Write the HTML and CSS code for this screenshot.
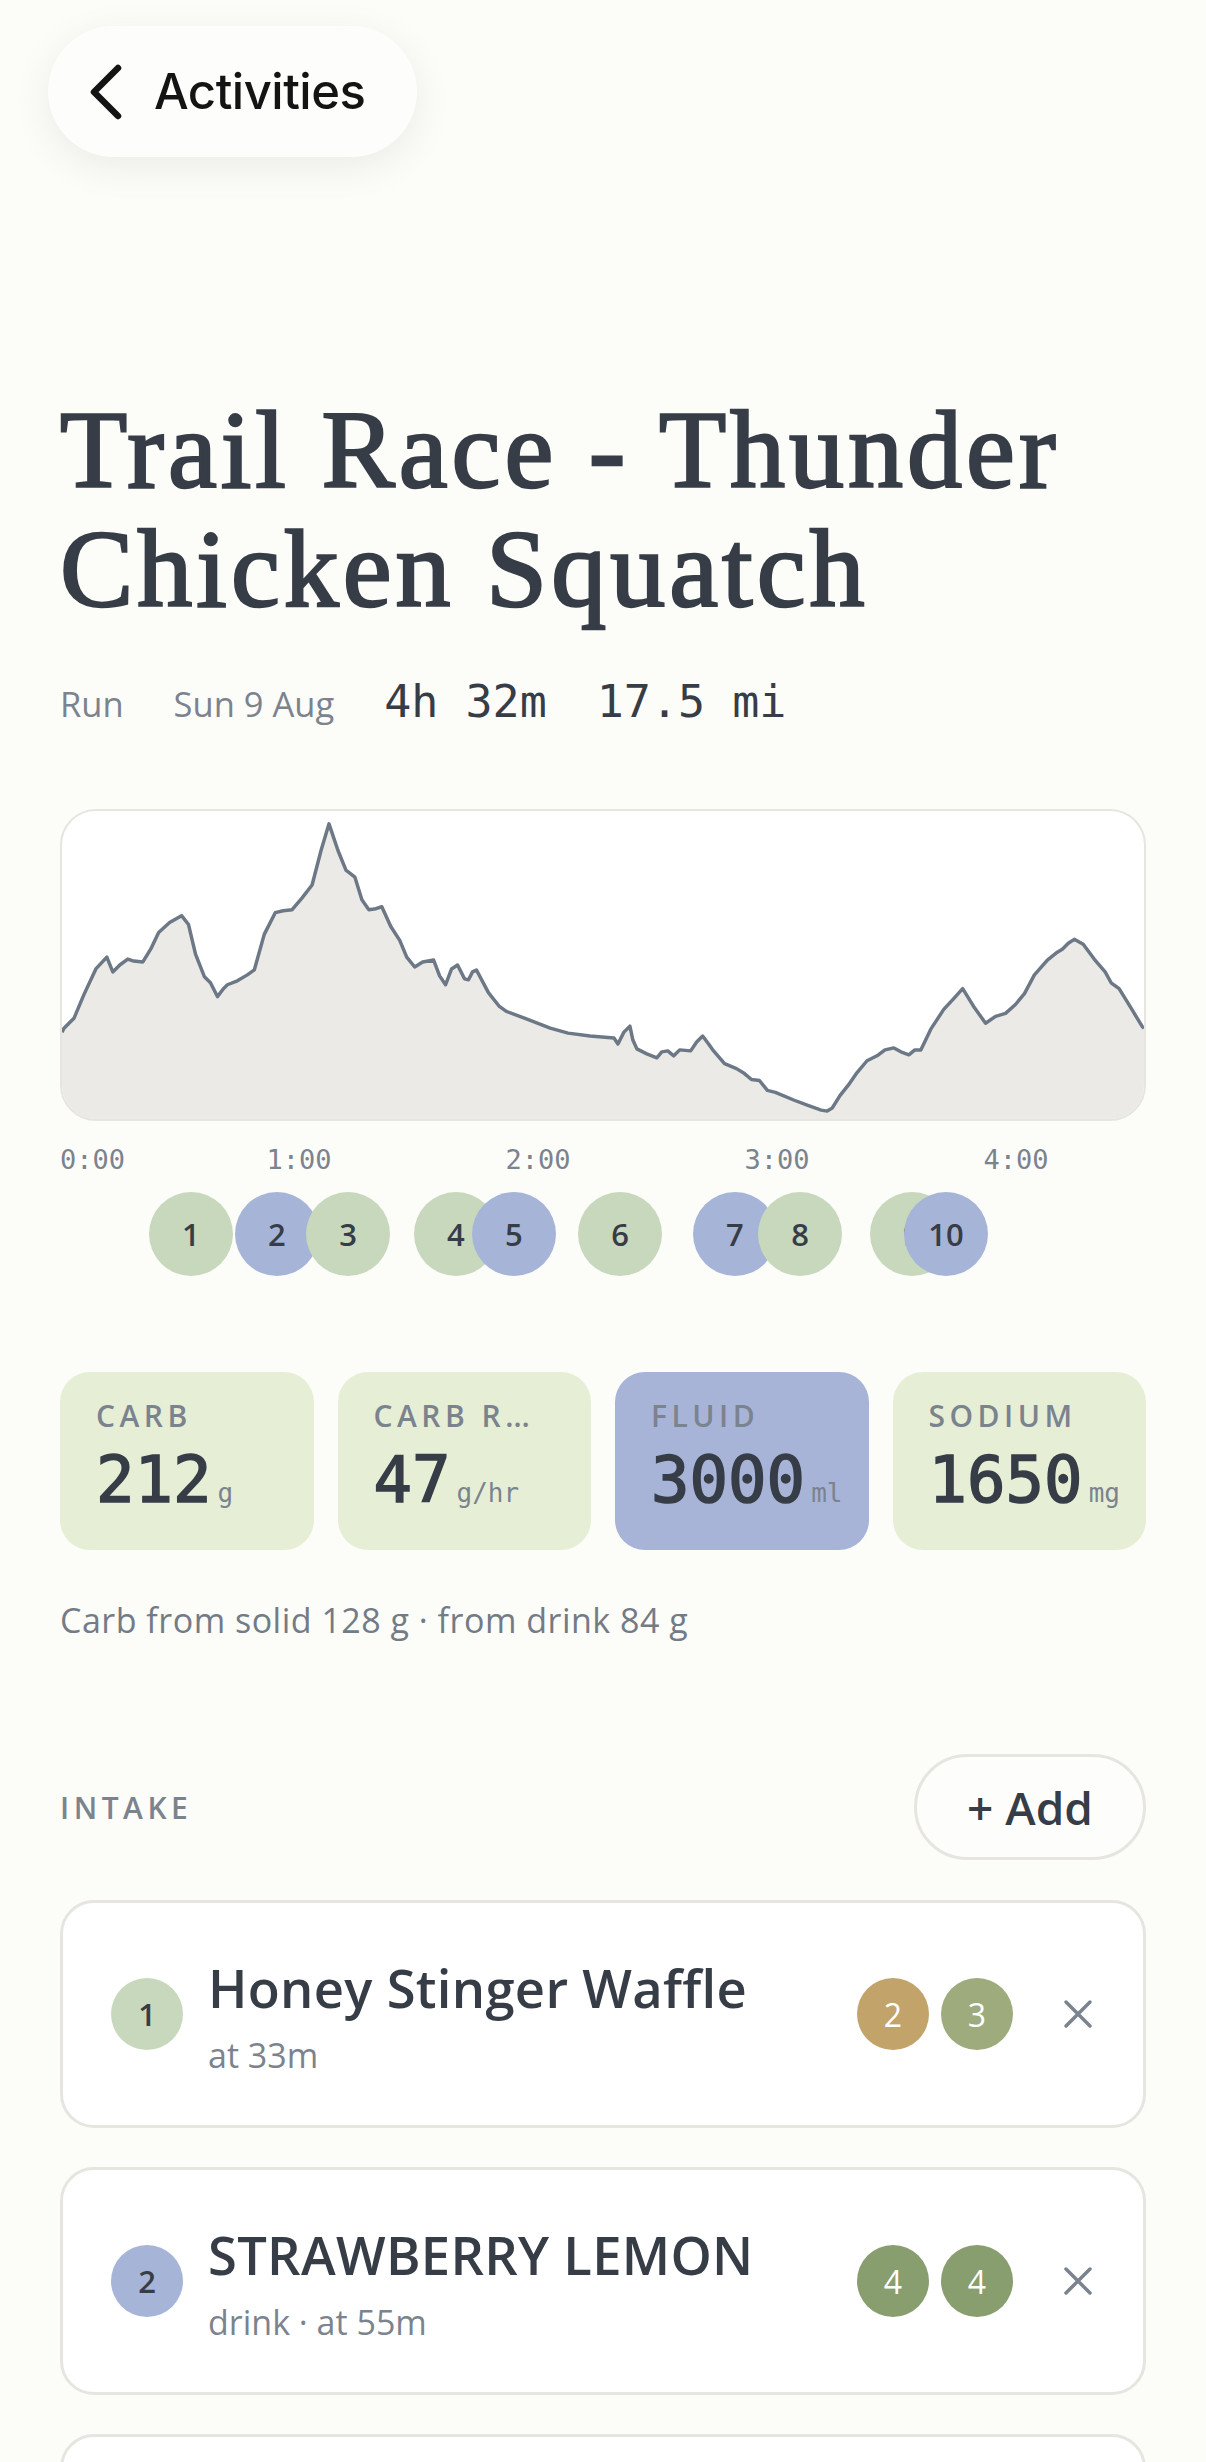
FILE: index.html
```html
<!DOCTYPE html>
<html>
<head>
    <title>Trail Race - Thunder Chicken Squatch</title>
    <link rel="stylesheet" href="styles.css">
</head>
<body>
    <nav class="topbar">
        <a class="back-btn" href="#">
            <svg class="back-icon" viewBox="0 0 36 60" width="36" height="60">
                <path d="M30 6 L6 30 L30 54" fill="none" stroke="#141414" stroke-width="6.5" stroke-linecap="round" stroke-linejoin="round"/>
            </svg>
            <span>Activities</span>
        </a>
    </nav>

    <main class="page">
        <h1 class="title">Trail Race - Thunder Chicken Squatch</h1>

        <div class="meta">
            <span class="meta-label">Run</span>
            <span class="meta-label">Sun 9 Aug</span>
            <span class="meta-num">4h 32m</span>
            <span class="meta-num">17.5 mi</span>
        </div>

        <div class="chart">
            <svg viewBox="0 0 1086 312" preserveAspectRatio="none" width="100%" height="100%">
                <path class="area" d="M0 224 L2 220 L12 210 L22 186 L34 160 L45 148 L51 163 L58 156 L66 150 L72 152 L81 153 L89 140 L97 123 L108 113 L120 106 L127 115 L134 145 L143 168 L149 174 L156 188 L162 180 L166 176 L176 172 L186 166 L193 161 L203 125 L214 103 L222 101 L231 100 L241 88 L251 75 L260 40 L268 13 L277 40 L285 60 L294 67 L301 90 L308 100 L315 99 L321 97 L330 117 L339 131 L346 148 L354 158 L362 153 L373 151 L379 167 L385 176 L391 160 L397 156 L404 170 L408 171 L412 163 L416 161 L428 184 L439 198 L446 203 L454 206 L470 212 L490 220 L508 225 L530 228 L554 230 L558 236 L564 224 L570 218 L573 232 L577 241 L587 246 L597 250 L602 244 L608 243 L614 248 L620 242 L631 243 L637 234 L643 228 L649 236 L654 243 L665 256 L677 261 L685 266 L692 272 L700 273 L708 283 L716 285 L735 293 L748 298 L762 303 L768 304 L773 301 L781 288 L789 278 L798 265 L808 253 L818 248 L826 242 L835 240 L842 244 L850 247 L856 242 L862 242 L872 221 L885 201 L895 190 L904 180 L915 198 L927 215 L937 208 L947 205 L957 196 L966 185 L976 166 L989 151 L999 143 L1004 140 L1010 134 L1016 130 L1025 135 L1036 150 L1047 163 L1053 174 L1061 180 L1072 198 L1084 218 L1086 220 L1086 312 L0 312 Z"/>
                <path class="line" d="M0 224 L2 220 L12 210 L22 186 L34 160 L45 148 L51 163 L58 156 L66 150 L72 152 L81 153 L89 140 L97 123 L108 113 L120 106 L127 115 L134 145 L143 168 L149 174 L156 188 L162 180 L166 176 L176 172 L186 166 L193 161 L203 125 L214 103 L222 101 L231 100 L241 88 L251 75 L260 40 L268 13 L277 40 L285 60 L294 67 L301 90 L308 100 L315 99 L321 97 L330 117 L339 131 L346 148 L354 158 L362 153 L373 151 L379 167 L385 176 L391 160 L397 156 L404 170 L408 171 L412 163 L416 161 L428 184 L439 198 L446 203 L454 206 L470 212 L490 220 L508 225 L530 228 L554 230 L558 236 L564 224 L570 218 L573 232 L577 241 L587 246 L597 250 L602 244 L608 243 L614 248 L620 242 L631 243 L637 234 L643 228 L649 236 L654 243 L665 256 L677 261 L685 266 L692 272 L700 273 L708 283 L716 285 L735 293 L748 298 L762 303 L768 304 L773 301 L781 288 L789 278 L798 265 L808 253 L818 248 L826 242 L835 240 L842 244 L850 247 L856 242 L862 242 L872 221 L885 201 L895 190 L904 180 L915 198 L927 215 L937 208 L947 205 L957 196 L966 185 L976 166 L989 151 L999 143 L1004 140 L1010 134 L1016 130 L1025 135 L1036 150 L1047 163 L1053 174 L1061 180 L1072 198 L1084 218 L1086 220"/>
            </svg>
        </div>

        <div class="axis">
            <span class="tick first" style="left: 0%">0:00</span>
            <span class="tick" style="left: 22.01%">1:00</span>
            <span class="tick" style="left: 44.02%">2:00</span>
            <span class="tick" style="left: 66.03%">3:00</span>
            <span class="tick" style="left: 88.04%">4:00</span>
        </div>

        <div class="markers">
            <span class="marker solid" style="left: 12.06%">1</span>
            <span class="marker drink" style="left: 19.98%">2</span>
            <span class="marker solid" style="left: 26.52%">3</span>
            <span class="marker solid" style="left: 36.46%">4</span>
            <span class="marker drink" style="left: 41.80%">5</span>
            <span class="marker solid" style="left: 51.57%">6</span>
            <span class="marker drink" style="left: 62.15%">7</span>
            <span class="marker solid" style="left: 68.14%">8</span>
            <span class="marker solid" style="left: 78.45%">9</span>
            <span class="marker drink" style="left: 81.58%">10</span>
        </div>

        <div class="stats">
            <div class="stat">
                <div class="stat-label">Carb</div>
                <div class="stat-value">212<span class="unit">g</span></div>
            </div>
            <div class="stat">
                <div class="stat-label">Carb rate</div>
                <div class="stat-value">47<span class="unit">g/hr</span></div>
            </div>
            <div class="stat fluid">
                <div class="stat-label">Fluid</div>
                <div class="stat-value">3000<span class="unit">ml</span></div>
            </div>
            <div class="stat">
                <div class="stat-label">Sodium</div>
                <div class="stat-value">1650<span class="unit">mg</span></div>
            </div>
        </div>

        <p class="carb-split">Carb from solid 128 g · from drink 84 g</p>

        <div class="section-head">
            <h2 class="section-label">Intake</h2>
            <button class="add-btn">+ Add</button>
        </div>

        <ul class="intake-list">
            <li class="intake">
                <span class="num solid">1</span>
                <div class="intake-text">
                    <div class="intake-name">Honey Stinger Waffle</div>
                    <div class="intake-sub">at 33m</div>
                </div>
                <div class="badges">
                    <span class="badge ochre">2</span>
                    <span class="badge olive">3</span>
                </div>
                <button class="remove">
                    <svg viewBox="0 0 30 30" width="30" height="30"><path d="M3 3 L27 27 M27 3 L3 27" stroke="#7b838e" stroke-width="3.5" stroke-linecap="round"/></svg>
                </button>
            </li>
            <li class="intake">
                <span class="num drink">2</span>
                <div class="intake-text">
                    <div class="intake-name">STRAWBERRY LEMON</div>
                    <div class="intake-sub">drink · at 55m</div>
                </div>
                <div class="badges">
                    <span class="badge green">4</span>
                    <span class="badge green">4</span>
                </div>
                <button class="remove">
                    <svg viewBox="0 0 30 30" width="30" height="30"><path d="M3 3 L27 27 M27 3 L3 27" stroke="#7b838e" stroke-width="3.5" stroke-linecap="round"/></svg>
                </button>
            </li>
            <li class="intake">
                <span class="num solid">3</span>
                <div class="intake-text">
                    <div class="intake-name">Clif Bloks</div>
                    <div class="intake-sub">at 1h 12m</div>
                </div>
                <div class="badges">
                    <span class="badge ochre">2</span>
                    <span class="badge olive">3</span>
                </div>
                <button class="remove">
                    <svg viewBox="0 0 30 30" width="30" height="30"><path d="M3 3 L27 27 M27 3 L3 27" stroke="#7b838e" stroke-width="3.5" stroke-linecap="round"/></svg>
                </button>
            </li>
        </ul>
    </main>
</body>
</html>
```

FILE: styles.css
```css
body {
    margin: 0;
    padding: 0;
    background-color: #fcfcf8;
    color: #373d47;
    font-family: 'Open Sans', 'Noto Sans', sans-serif;
    overflow: hidden;
}
.topbar {
    padding: 26px 48px 0;
}
.back-btn {
    display: inline-flex;
    align-items: center;
    gap: 30px;
    height: 131px;
    padding: 0 52px 0 40px;
    box-sizing: border-box;
    border-radius: 66px;
    background: #fdfdfb;
    box-shadow: 0 10px 40px rgba(0, 0, 0, 0.07);
    color: #141414;
    text-decoration: none;
    font-family: 'Inter', sans-serif;
    font-size: 49px;
    font-weight: 500;
    letter-spacing: -0.5px;
}
.back-icon {
    width: 36px;
    height: 60px;
}
.page {
    padding: 0 60px;
}
.title {
    margin: 234px 0 0;
    font-family: 'Liberation Serif', serif;
    font-size: 110px;
    font-weight: 400;
    line-height: 119px;
    letter-spacing: 4px;
    color: #373d47;
    -webkit-text-stroke: 2.4px #373d47;
}
.meta {
    display: flex;
    align-items: baseline;
    gap: 50px;
    margin-top: 46px;
    height: 60px;
}
.meta-label {
    font-size: 34.5px;
    color: #7b838e;
}
.meta-num {
    font-family: 'DejaVu Sans Mono', monospace;
    font-size: 45px;
    color: #373d47;
}
.chart {
    margin-top: 74px;
    height: 312px;
    border: 2px solid #e6e5e0;
    border-radius: 36px;
    background: #ffffff;
    overflow: hidden;
    box-sizing: border-box;
}
.chart svg {
    display: block;
}
.area {
    fill: #ebeae6;
}
.line {
    fill: none;
    stroke: #6d7886;
    stroke-width: 3.5;
    stroke-linejoin: round;
}
.axis {
    position: relative;
    height: 30px;
    margin-top: 24px;
    font-family: 'DejaVu Sans Mono', monospace;
    font-size: 27px;
    color: #7b838e;
}
.tick {
    position: absolute;
    top: 0;
    transform: translateX(-50%);
    line-height: 30px;
}
.tick.first {
    transform: none;
}
.markers {
    position: relative;
    height: 84px;
    margin-top: 17px;
}
.marker {
    position: absolute;
    top: 0;
    width: 84px;
    height: 84px;
    margin-left: -42px;
    border-radius: 50%;
    display: flex;
    align-items: center;
    justify-content: center;
    font-size: 31px;
    font-weight: 600;
    color: #373d47;
}
.solid {
    background: #c8d8bc;
}
.drink {
    background: #a6b4d7;
}
.stats {
    display: grid;
    grid-template-columns: repeat(4, 1fr);
    gap: 24px;
    margin-top: 96px;
}
.stat {
    height: 178px;
    box-sizing: border-box;
    padding: 24px 46px 0 36px;
    border-radius: 30px;
    background: #e6efd6;
    min-width: 0;
}
.stat.fluid {
    background: #a7b4d7;
}
.stat-label {
    font-size: 30px;
    font-weight: 600;
    letter-spacing: 4.5px;
    text-transform: uppercase;
    color: #7b838e;
    white-space: nowrap;
    overflow: hidden;
    text-overflow: ellipsis;
    line-height: 40px;
}
.stat-value {
    margin-top: 6px;
    margin-right: -30px;
    font-family: 'DejaVu Sans Mono', monospace;
    font-size: 64px;
    font-weight: 400;
    line-height: 76px;
    white-space: nowrap;
    -webkit-text-stroke: 1.6px #373d47;
}
.unit {
    margin-left: 6px;
    font-size: 26px;
    font-weight: 400;
    color: #7b838e;
    -webkit-text-stroke: 0;
}
.carb-split {
    margin: 48px 0 0;
    font-size: 34px;
    letter-spacing: 0.5px;
    line-height: 44px;
    color: #737b86;
}
.section-head {
    display: flex;
    align-items: center;
    justify-content: space-between;
    margin-top: 112px;
}
.section-label {
    margin: 0;
    font-size: 30px;
    font-weight: 600;
    letter-spacing: 4.5px;
    text-transform: uppercase;
    color: #7b838e;
}
.add-btn {
    height: 106px;
    padding: 0 50px;
    border: 3px solid #e6e5e0;
    border-radius: 53px;
    background: #fdfdfb;
    font-family: 'Open Sans', sans-serif;
    font-size: 46px;
    font-weight: 600;
    color: #373d47;
}
.intake-list {
    list-style: none;
    margin: 40px 0 0;
    padding: 0;
    display: flex;
    flex-direction: column;
    gap: 39px;
}
.intake {
    display: flex;
    align-items: center;
    height: 228px;
    box-sizing: border-box;
    padding: 0 50px 0 48px;
    border: 3px solid #e6e5e0;
    border-radius: 34px;
    background: #ffffff;
}
.num {
    flex: none;
    width: 72px;
    height: 72px;
    border-radius: 50%;
    display: flex;
    align-items: center;
    justify-content: center;
    font-size: 31px;
    font-weight: 600;
    color: #373d47;
}
.intake-text {
    flex: 1;
    margin-left: 25px;
    margin-top: 4px;
}
.intake-name {
    font-size: 52.5px;
    font-weight: 600;
    line-height: 62px;
    letter-spacing: 0.3px;
}
.intake-sub {
    margin-top: 15px;
    font-size: 34px;
    line-height: 42px;
    color: #7b838e;
}
.badges {
    display: flex;
    gap: 12px;
}
.badge {
    width: 72px;
    height: 72px;
    border-radius: 50%;
    display: flex;
    align-items: center;
    justify-content: center;
    font-size: 32px;
    color: #ffffff;
}
.ochre {
    background: #c2a46b;
}
.olive {
    background: #9dab7d;
}
.green {
    background: #889e6f;
}
.remove {
    margin-left: 50px;
    padding: 0;
    border: none;
    background: none;
    display: flex;
}
```
